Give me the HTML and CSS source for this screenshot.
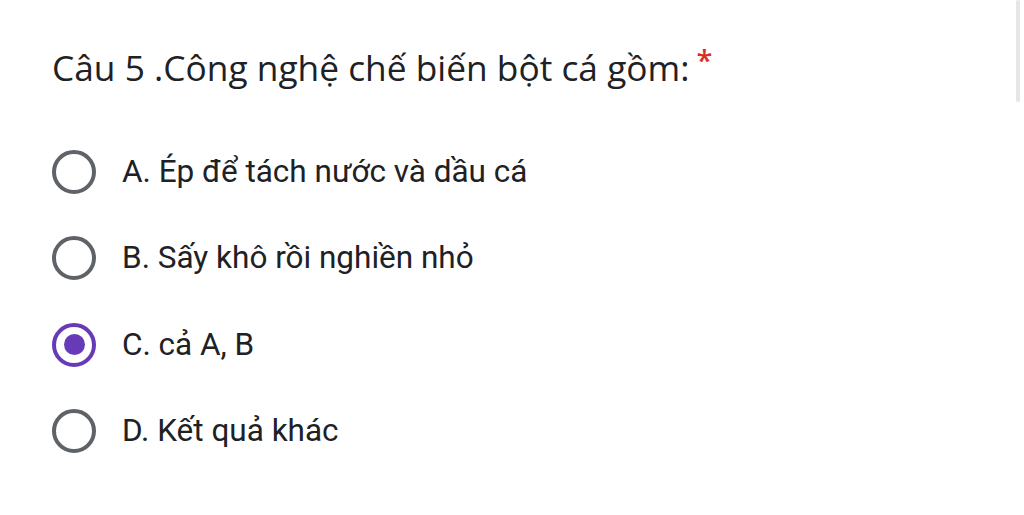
FILE: index.html
```html
<!DOCTYPE html>
<html lang="vi">
<head>
<meta charset="utf-8">
<link rel="stylesheet" href="styles.css">
</head>
<body>
<div class="scrollbar"></div>
<main class="question">
  <h1 class="title">Câu 5 .Công nghệ chế biến bột cá gồm:<span class="req">*</span></h1>
  <ul class="options">
    <li class="option"><span class="radio"></span><span class="label">A. Ép để tách nước và dầu cá</span></li>
    <li class="option"><span class="radio"></span><span class="label">B. Sấy khô rồi nghiền nhỏ</span></li>
    <li class="option"><span class="radio checked"></span><span class="label">C. cả A, B</span></li>
    <li class="option"><span class="radio"></span><span class="label">D. Kết quả khác</span></li>
  </ul>
</main>
</body>
</html>
```
FILE: styles.css
```css
html, body { margin: 0; padding: 0; background: #fff; }
body { width: 1024px; height: 515px; overflow: hidden; position: relative; color: #202124; }
.scrollbar { position: absolute; right: 4px; top: 0; width: 4px; height: 102px; background: #e6e6e6; border-radius: 2px; }
.question { padding: 43px 0 0 52px; }
.title { margin: 0; font-family: "Open Sans", "Noto Sans", sans-serif; font-weight: 400; font-size: 35.3px; line-height: 48px; height: 48px; color: #202124; }
.req { color: #d93025; font-size: 29px; font-weight: 600; line-height: 0; vertical-align: 10px; margin-left: 7px; }
.options { list-style: none; margin: 58.5px 0 0 0; padding: 0; display: flex; flex-direction: column; gap: 42.5px; }
.option { display: flex; align-items: center; gap: 26px; height: 44px; }
.radio { box-sizing: border-box; width: 44px; height: 44px; border: 4.5px solid #5f6368; border-radius: 50%; display: flex; align-items: center; justify-content: center; flex: none; }
.radio.checked { border-color: #673ab7; }
.radio.checked::after { content: ""; width: 21px; height: 21px; border-radius: 50%; background: #673ab7; }
.label { font-family: Roboto, "Noto Sans", sans-serif; font-size: 31.5px; line-height: 36px; color: #202124; }
```
